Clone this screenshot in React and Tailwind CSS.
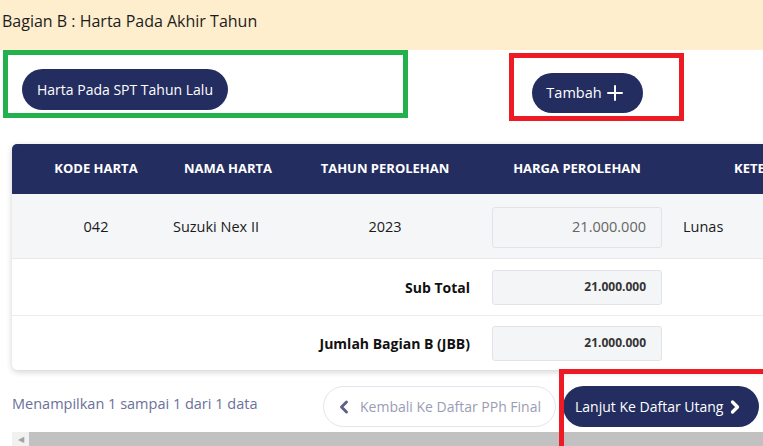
import { Plus, ChevronLeft, ChevronRight } from 'lucide-react';

export default function App() {
    return (
        <div className="relative w-[763px] h-[446px] overflow-hidden bg-white font-['Open_Sans',sans-serif]">
            <div className="h-[50px] bg-[#feeecd] pl-[2px] pt-[9px] text-[16px] text-[#1c1c1c]">
                Bagian B : Harta Pada Akhir Tahun
            </div>

            <div className="flex items-start">
                <div className="ml-[3px] w-[405px] h-[68px] border-[5px] border-[#22b14c] pl-[14px] pt-[14px]">
                    <button className="h-[41px] w-[206px] rounded-full bg-[#232d5f] text-white text-[14px]">
                        Harta Pada SPT Tahun Lalu
                    </button>
                </div>
                <div className="ml-[101px] mt-[3px] w-[175px] h-[68px] border-[5px] border-[#ed1c24] pl-[18px] pt-[15px]">
                    <button className="h-[40px] w-[111px] rounded-full bg-[#232d5f] text-white text-[14.5px] flex items-center justify-center gap-[1px] pr-[2px]">
                        Tambah
                        <Plus size={24} strokeWidth={2} />
                    </button>
                </div>
            </div>

            <div className="ml-[12px] mt-[23px] w-[900px] rounded-tl-[5px] rounded-bl-[6px] shadow-[0_2px_6px_rgba(0,0,0,0.18)] overflow-hidden">
                <div className="flex h-[50px] items-center bg-[#232d5f] text-white text-[13px] font-bold uppercase">
                    <div className="w-[168px] text-center">Kode Harta</div>
                    <div className="w-[96px] text-center">Nama Harta</div>
                    <div className="w-[208px] text-center pl-[10px]">Tahun Perolehan</div>
                    <div className="w-[186px] text-center">Harga Perolehan</div>
                    <div className="w-[216px] text-center">Keterangan</div>
                </div>

                <div className="flex h-[65px] items-center pt-[2px] bg-[#f5f6f8] border-b border-[#e7e8ec] text-[14.5px] text-[#1a1a1a]">
                    <div className="w-[168px] text-center">042</div>
                    <div className="w-[96px] flex justify-center pr-[24px] whitespace-nowrap">Suzuki Nex II</div>
                    <div className="w-[208px] text-center pl-[10px]">2023</div>
                    <div className="w-[186px] px-[8px]">
                        <div className="h-[41px] rounded-[3px] border border-[#e1e3e8] bg-[#f4f5f7] flex items-center justify-end pr-[15px] text-[#666]">
                            21.000.000
                        </div>
                    </div>
                    <div className="w-[216px] pl-[13px]">Lunas</div>
                </div>

                <div className="flex h-[57px] items-center bg-white border-b border-[#ececef] text-[14px]">
                    <div className="w-[472px] text-right pr-[14px] font-bold text-[#111]">Sub Total</div>
                    <div className="w-[186px] px-[8px]">
                        <div className="h-[35px] rounded-[3px] border border-[#e1e3e8] bg-[#f4f5f7] flex items-center justify-end pr-[15px] text-[12px] font-bold text-[#333]">
                            21.000.000
                        </div>
                    </div>
                </div>

                <div className="flex h-[54px] items-center bg-white text-[14px]">
                    <div className="w-[472px] text-right pr-[14px] font-bold text-[#111]">Jumlah Bagian B (JBB)</div>
                    <div className="w-[186px] px-[8px]">
                        <div className="h-[35px] rounded-[3px] border border-[#e1e3e8] bg-[#f4f5f7] flex items-center justify-end pr-[15px] text-[12px] font-bold text-[#333]">
                            21.000.000
                        </div>
                    </div>
                </div>
            </div>

            <div className="flex items-center mt-[16px] pl-[12px]">
                <div className="w-[311px] pb-[6px] text-[14.5px] text-[#6b7199] whitespace-nowrap">Menampilkan 1 sampai 1 dari 1 data</div>
                <button className="w-[233px] h-[41px] rounded-full border border-[#e4e4ee] bg-white flex items-center pl-[10px] gap-[6px] text-[14px] text-[#9a9db2]">
                    <ChevronLeft size={20} strokeWidth={3.5} className="text-[#5c6287]" />
                    Kembali Ke Daftar PPh Final
                </button>
                <button className="ml-[7px] w-[196px] h-[41px] rounded-full bg-[#232d5f] flex items-center pl-[12px] gap-[2px] text-[14px] text-white">
                    Lanjut Ke Daftar Utang
                    <ChevronRight size={20} strokeWidth={4} />
                </button>
            </div>

            <div className="ml-[12px] mt-[5px] h-[14px] flex">
                <div className="w-[17px] bg-[#f1f1f1] flex items-center justify-center text-[8px] text-[#a3a3a3]">◀</div>
                <div className="flex-1 bg-[#c1c1c1]" />
            </div>

            <div className="absolute left-[559px] top-[369px] w-[210px] h-[82px] border-[5px] border-[#ed1c24]" />
        </div>
    );
}
